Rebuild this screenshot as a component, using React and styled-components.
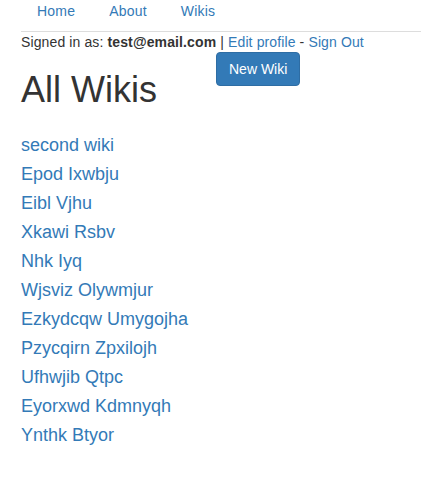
import React from "react";
import styled, { createGlobalStyle } from "styled-components";

const GlobalStyle = createGlobalStyle`
  body {
    margin: 0;
    background: #fff;
    font-family: "Liberation Sans", Arial, sans-serif;
    font-size: 14px;
    line-height: 20px;
    color: #333;
  }
  a {
    color: #337ab7;
    text-decoration: none;
  }
`;

const Page = styled.div`
  padding-left: 21px;
`;

const NavTabs = styled.ul`
  display: flex;
  list-style: none;
  margin: 0;
  padding: 0;
  height: 31px;
  border-bottom: 1px solid #ddd;
`;

const NavItem = styled.li`
  margin-right: 2px;
`;

const NavLink = styled.a`
  display: block;
  padding: 1px 16px 0;
  line-height: 20px;
  letter-spacing: 0.2px;
`;

const SignedIn = styled.div`
  line-height: 20px;
  letter-spacing: 0.12px;
`;

const Header = styled.div`
  display: grid;
  grid-template-columns: 195px auto;
  align-items: start;
`;

const Title = styled.h1`
  margin: 18px 0 10px;
  font-size: 36px;
  font-weight: 500;
  line-height: 1.1;
`;

const Button = styled.a`
  justify-self: start;
  display: inline-block;
  padding: 6px 12px;
  line-height: 20px;
  font-size: 14px;
  color: #fff;
  background: #337ab7;
  border: 1px solid #2e6da4;
  border-radius: 4px;
`;

const WikiList = styled.div`
  margin-top: 11px;
`;

const WikiLink = styled.a`
  display: block;
  font-size: 18px;
  line-height: 29px;
`;

const wikis = [
  "second wiki",
  "Epod Ixwbju",
  "Eibl Vjhu",
  "Xkawi Rsbv",
  "Nhk Iyq",
  "Wjsviz Olywmjur",
  "Ezkydcqw Umygojha",
  "Pzycqirn Zpxilojh",
  "Ufhwjib Qtpc",
  "Eyorxwd Kdmnyqh",
  "Ynthk Btyor",
];

export default function App() {
  return (
    <Page>
      <GlobalStyle />
      <NavTabs>
        <NavItem><NavLink href="#">Home</NavLink></NavItem>
        <NavItem><NavLink href="#">About</NavLink></NavItem>
        <NavItem><NavLink href="#">Wikis</NavLink></NavItem>
      </NavTabs>
      <SignedIn>
        Signed in as: <strong>test@email.com</strong> | <a href="#">Edit profile</a> - <a href="#">Sign Out</a>
      </SignedIn>
      <Header>
        <Title>All Wikis</Title>
        <Button href="#">New Wiki</Button>
      </Header>
      <WikiList>
        {wikis.map((w) => (
          <WikiLink key={w} href="#">{w}</WikiLink>
        ))}
      </WikiList>
    </Page>
  );
}
